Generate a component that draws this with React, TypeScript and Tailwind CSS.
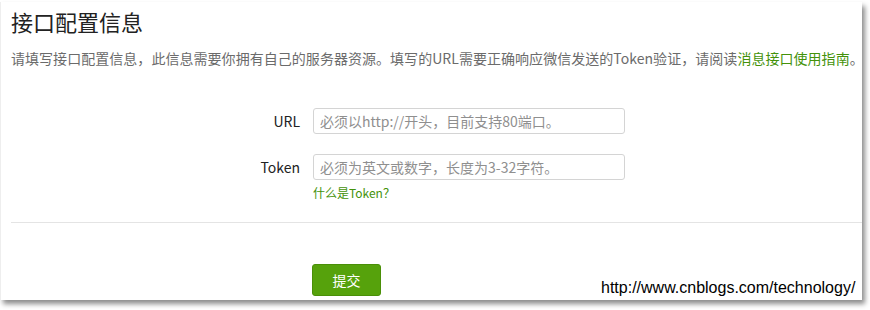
import React from 'react';

const CJK = '"Noto Sans CJK SC", "Liberation Sans", sans-serif';

export default function App() {
    return (
        <div className="relative w-[870px] h-[310px] bg-white overflow-hidden" style={{ fontFamily: CJK }}>
            {/* Card with screenshot drop shadow */}
            <div className="absolute left-0 top-[2px] w-[862px] h-[298px] bg-white border-l border-[#eeeeee] shadow-[3px_4px_5px_rgba(0,0,0,0.45)]">
                <div className="pl-[10px] pr-[8px]">
                    <h2 className="pt-[4px] text-[22px] leading-[30px] text-[#222] font-normal">接口配置信息</h2>
                    <p className="mt-[12px] text-[14px] leading-[20px] text-[#6b6b6b] whitespace-nowrap tracking-[0.04px]">
                        请填写接口配置信息，此信息需要你拥有自己的服务器资源。填写的URL需要正确响应微信发送的Token验证，请阅读
                        <a className="text-[#44920a]">消息接口使用指南</a>。
                    </p>
                </div>

                {/* Form */}
                <div className="mt-[40px] flex flex-col gap-[20px]">
                    <div className="flex items-center">
                        <label className="w-[299px] text-right text-[14px] text-[#222]">URL</label>
                        <input
                            className="ml-[13px] w-[312px] h-[26px] px-[6px] rounded-[3px] border border-[#d4d4d4] text-[14px] text-[#222] placeholder:text-[#8f8f8f] outline-none"
                            placeholder="必须以http://开头，目前支持80端口。"
                        />
                    </div>
                    <div>
                        <div className="flex items-center">
                            <label className="w-[299px] text-right text-[14px] text-[#222]">Token</label>
                            <input
                                className="ml-[13px] w-[312px] h-[26px] px-[6px] rounded-[3px] border border-[#d4d4d4] text-[14px] text-[#222] placeholder:text-[#8f8f8f] outline-none"
                                placeholder="必须为英文或数字，长度为3-32字符。"
                            />
                        </div>
                        <div className="ml-[312px] mt-[5px] text-[12px] leading-[16px] text-[#44920a]">什么是Token？</div>
                    </div>
                </div>

                <div className="ml-[10px] mt-[21px] h-px bg-[#e4e4e4]" />

                <div className="ml-[311px] mt-[41px]">
                    <button className="w-[69px] h-[32px] rounded-[3px] bg-[#56a20c] border border-[#4a8f08] text-white text-[14px]">提交</button>
                </div>
            </div>

            {/* Watermark */}
            <div
                className="absolute left-[601px] top-[277px] text-[16px] leading-[22px] text-black whitespace-nowrap"
                style={{ fontFamily: '"Liberation Sans", Arial, sans-serif' }}
            >
                http://www.cnblogs.com/technology/
            </div>
        </div>
    );
}
